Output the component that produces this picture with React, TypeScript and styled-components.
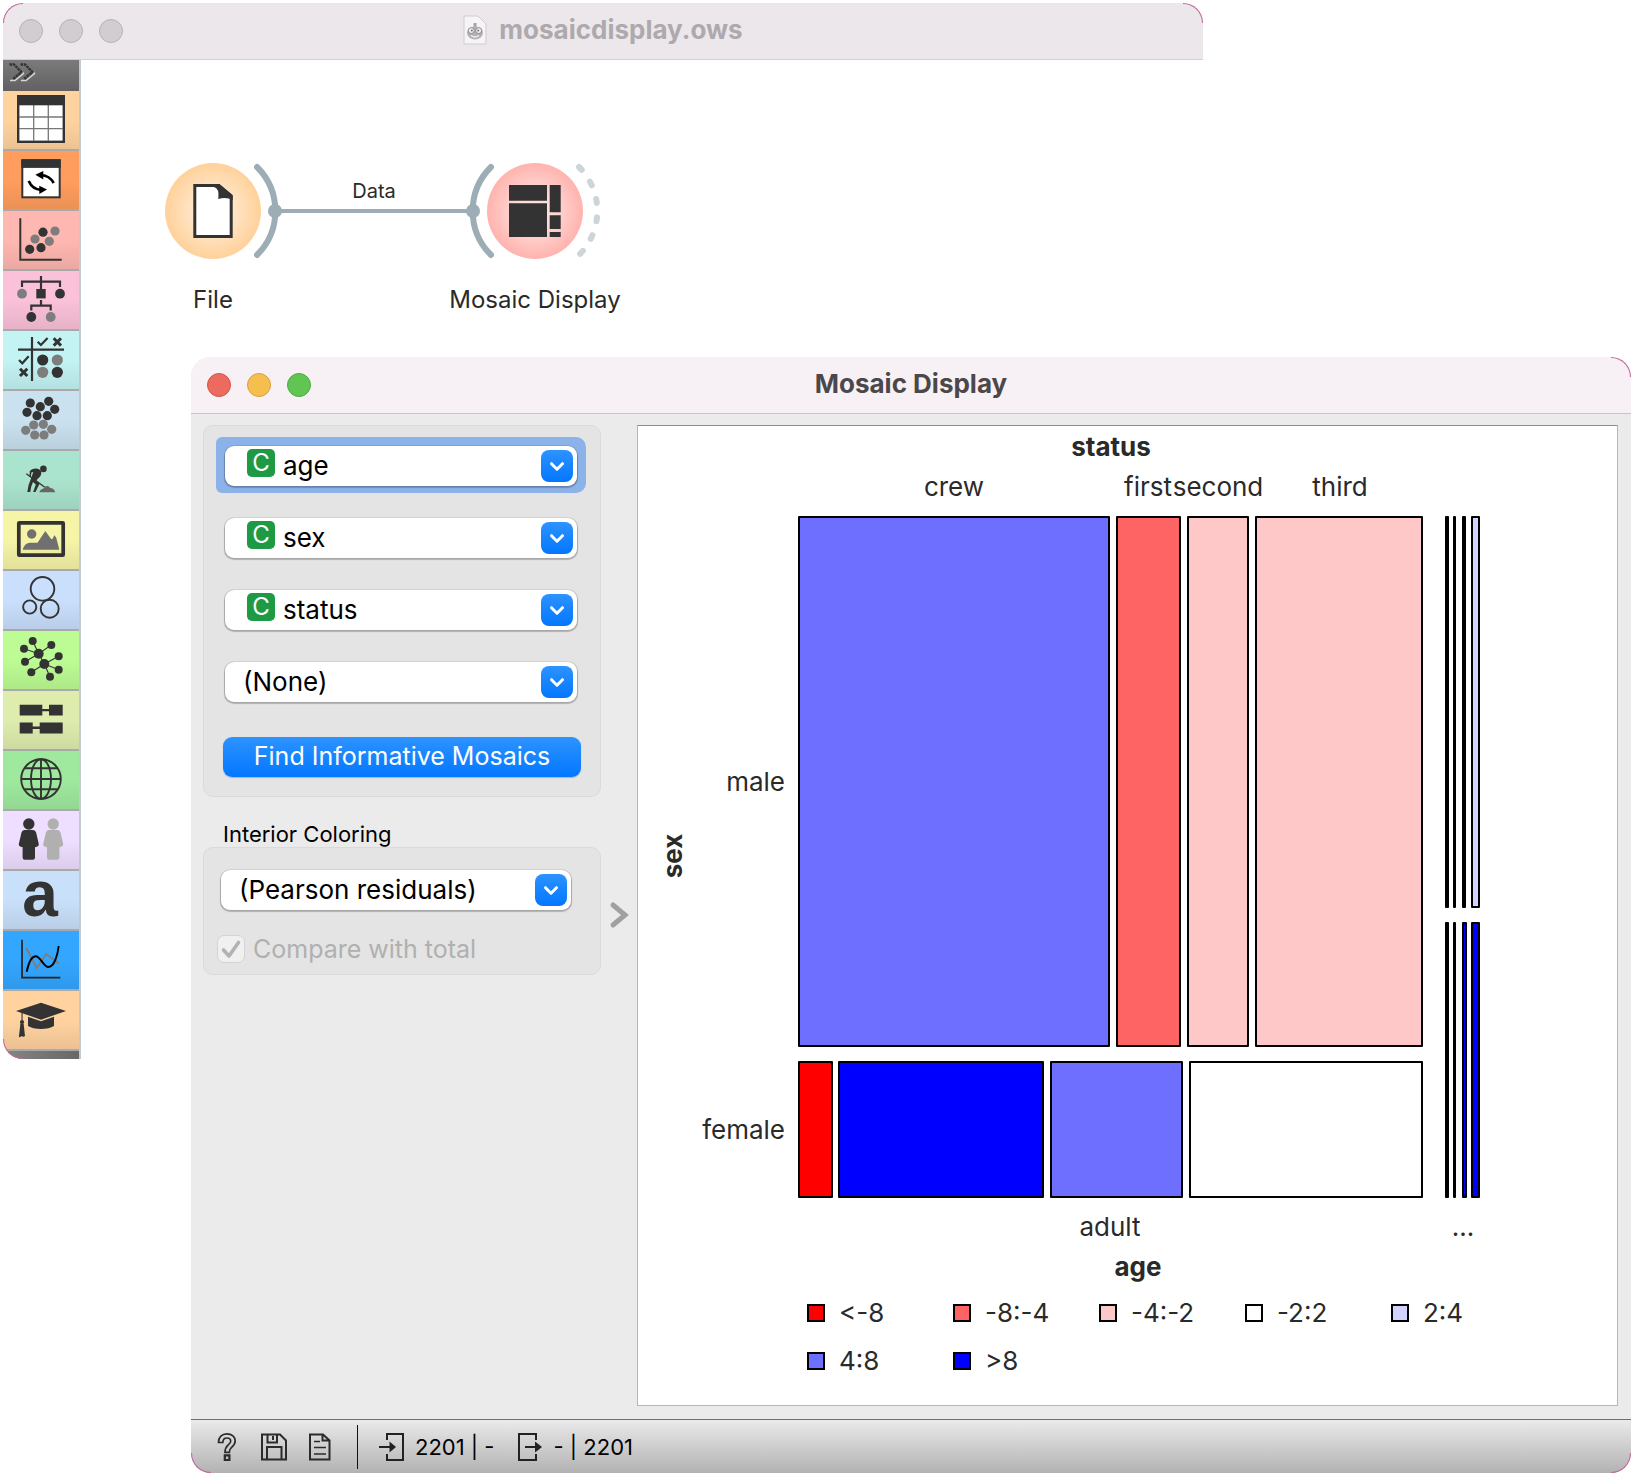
import React from "react";
import styled, { createGlobalStyle } from "styled-components";

const GlobalStyle = createGlobalStyle`
  * {
    box-sizing: border-box;
  }
  body {
    margin: 0;
    background: #fff;
    font-family: Inter, "Liberation Sans", sans-serif;
    color: #000;
  }
  button, select, input {
    font-family: inherit;
  }
`;

/* ---------- windows ---------- */

const Desktop = styled.main`
  display: grid;
  grid-template-columns: minmax(0, 1fr);
  align-items: start;
`;

const DocumentWindow = styled.section`
  grid-area: 1 / 1;
  position: relative;
  margin: 3px 431px 0 3px;
`;

const DialogWindow = styled.section`
  grid-area: 1 / 1;
  position: relative;
  margin: 357px 3px 3px 191px;
  border-radius: 20px;
  background: #ebebeb;
`;

const Corner = styled.span<{ $v: "top" | "bottom"; $h: "left" | "right" }>`
  position: absolute;
  ${(p) => p.$v}: 0;
  ${(p) => p.$h}: 0;
  width: 20px;
  height: 20px;
  border: 0 solid #c4689d;
  border-${(p) => p.$v}-width: 1px;
  border-${(p) => p.$h}-width: 1px;
  border-${(p) => p.$v}-${(p) => p.$h}-radius: 20px;
`;

const TitleBar = styled.header<{ $active?: boolean }>`
  display: grid;
  grid-template-columns: 120px 1fr 120px;
  align-items: center;
  height: 57px;
  padding: 0 16px;
  border-radius: 20px 20px 0 0;
  border-bottom: 1px solid ${(p) => (p.$active ? "#c9c3c8" : "#d3d0d3")};
  background: ${(p) => (p.$active ? "#f7f1f6" : "#ece7eb")};
  color: ${(p) => (p.$active ? "#4b474a" : "#aea9ad")};
`;

const Lights = styled.div`
  display: flex;
  gap: 16px;
`;

const Light = styled.button<{ $fill: string; $edge: string }>`
  width: 24px;
  height: 24px;
  padding: 0;
  border: 1px solid ${(p) => p.$edge};
  border-radius: 50%;
  background: ${(p) => p.$fill};
`;

const Title = styled.h1`
  display: flex;
  align-items: center;
  justify-content: center;
  gap: 12px;
  margin: 0;
  padding-bottom: 3px;
  font-size: 26px;
  line-height: 32px;
  font-weight: 700;
`;

/* ---------- document window ---------- */

const Workspace = styled.div`
  display: flex;
`;

const Dock = styled.nav`
  flex: none;
  width: 78px;
  border-right: 2px solid #c2c9cf;
`;

const DockBody = styled.div`
  overflow: hidden;
  border-bottom-left-radius: 20px;
`;

const ExpandButton = styled.button`
  display: block;
  width: 100%;
  height: 31px;
  padding: 0;
  border: 0;
  background: linear-gradient(#7b7b7b, #616161);
  svg {
    display: block;
  }
`;

const CategoryButton = styled.button<{ $color: string }>`
  display: block;
  width: 100%;
  height: 60px;
  padding: 0;
  border: 0;
  border-bottom: 2px solid #a9a9a9;
  background: linear-gradient(rgba(0, 0, 0, 0) 50%, rgba(0, 0, 0, 0.08)) ${(p) => p.$color};
  svg {
    display: block;
    overflow: visible;
  }
`;

const DockFoot = styled.div`
  height: 8px;
  background: linear-gradient(90deg, #858585, #686868);
`;

const Canvas = styled.div`
  flex: 1;
  min-width: 0;
  svg {
    display: block;
  }
`;

/* ---------- dialog ---------- */

const DialogBody = styled.div`
  display: grid;
  grid-template-columns: 398px 36px minmax(0, 1fr);
  padding: 11px 13px 13px 12px;
`;

const Group = styled.div<{ $pad: string }>`
  padding: ${(p) => p.$pad};
  border: 1px solid #dadada;
  border-radius: 10px;
  background: #e4e4e4;
`;

const GroupTitle = styled.h2`
  margin: 24px 0 0 20px;
  font-size: 22px;
  line-height: 26px;
  font-weight: 400;
`;

const ComboStack = styled.div`
  display: flex;
  flex-direction: column;
  gap: 16px;
`;

const ComboRing = styled.div<{ $focused?: boolean }>`
  padding: 9px 9px 7px;
  border-radius: 6px 10px 10px 6px;
  background: ${(p) => (p.$focused ? "#8cb2ea" : "transparent")};
`;

const ComboBox = styled.div`
  position: relative;
  height: 40px;
  border-radius: 9px;
  background: #fff;
  box-shadow: 0 0 0 1px rgba(0, 0, 0, 0.06), 0 1px 1px 1px rgba(0, 0, 0, 0.22);
`;

const ComboSelect = styled.select<{ $icon?: boolean }>`
  appearance: none;
  display: block;
  width: 100%;
  height: 40px;
  padding: 0 40px 2px ${(p) => (p.$icon ? 58 : 18)}px;
  border: 0;
  border-radius: 9px;
  outline: 0;
  background: transparent;
  color: #000;
  font-size: 26px;
`;

const VariableBadge = styled.span`
  position: absolute;
  left: 22px;
  top: 3px;
  width: 28px;
  height: 28px;
  border-radius: 5px;
  background: #1d9a43;
  color: #fff;
  font-size: 24px;
  line-height: 28px;
  text-align: center;
  pointer-events: none;
`;

const ComboArrow = styled.span`
  position: absolute;
  right: 4px;
  top: 4px;
  width: 32px;
  height: 32px;
  border-radius: 8px;
  background: linear-gradient(#2d93ff, #0277ff);
  pointer-events: none;
`;

const PrimaryButton = styled.button`
  display: block;
  width: 358px;
  height: 40px;
  margin: 28px 0 0 7px;
  padding: 0 0 2px;
  border: 0;
  border-radius: 9px;
  background: linear-gradient(#2d93ff, #0277ff);
  box-shadow: 0 1px 1px rgba(0, 80, 200, 0.3);
  color: #fff;
  font-size: 25px;
  line-height: 32px;
`;

const CheckRow = styled.label`
  display: flex;
  align-items: center;
  gap: 8px;
  height: 28px;
  margin: 18px 0 0 5px;
  color: #b0b0b0;
  font-size: 25px;
  line-height: 28px;
`;

const CheckSlot = styled.span`
  position: relative;
  width: 28px;
  height: 28px;
  svg {
    position: absolute;
    left: 0;
    top: 0;
    pointer-events: none;
  }
`;

const CheckInput = styled.input`
  appearance: none;
  display: block;
  width: 28px;
  height: 28px;
  margin: 0;
  border: 1px solid #d4d4d4;
  border-radius: 7px;
  background: #f0f0f0;
`;

const CollapseButton = styled.button`
  align-self: center;
  justify-self: center;
  width: 24px;
  height: 32px;
  padding: 0;
  border: 0;
  background: none;
  svg {
    display: block;
  }
`;

const ChartFrame = styled.div`
  border: 1px solid #b6b6b6;
  border-top-color: #8e8e8e;
  background: #fff;
  svg {
    display: block;
    width: 100%;
    height: auto;
  }
`;

const StatusBar = styled.footer`
  display: flex;
  align-items: center;
  height: 54px;
  padding: 0 26px;
  border-top: 1px solid #6f6f6f;
  border-radius: 0 0 20px 20px;
  background: linear-gradient(#eaeaea, #b2b2b2);
  font-size: 22px;
  line-height: 28px;
`;

const Tools = styled.div`
  display: flex;
  gap: 16px;
`;

const ToolButton = styled.button`
  width: 28px;
  height: 30px;
  padding: 0;
  border: 0;
  background: none;
  svg {
    display: block;
  }
`;

const Divider = styled.span`
  width: 1px;
  height: 44px;
  margin: 0 20px 0 24px;
  background: #111;
`;

const Summary = styled.span`
  display: flex;
  align-items: center;
  gap: 9px;
  margin-right: 22px;
  white-space: pre;
`;

/* ---------- category icons ---------- */

const DARK = "#333";
const GRAY = "#7d7d7d";

type Dot = [number, number, number?];

const Dots: React.FC<{ points: Dot[]; r: number; fill: string }> = ({ points, r, fill }) => (
  <>
    {points.map(([x, y, own], i) => (
      <circle key={i} cx={x} cy={y} r={own || r} fill={fill} />
    ))}
  </>
);

const Person: React.FC<{ x: number; fill: string }> = ({ x, fill }) => (
  <g transform={`translate(${x} 0)`} fill={fill}>
    <circle cx="0" cy="13" r="5.7" />
    <path d="M-4.5 19H4.5Q6.6 19 7.3 21.5L10 33Q10.2 35.8 6.2 36.2V46.5Q6.2 48.7 4 48.7H-4Q-6.2 48.7-6.2 46.5V36.2Q-10.2 35.8-10 33L-7.3 21.5Q-6.6 19-4.5 19Z" />
  </g>
);

const categories: { name: string; color: string; icon: React.ReactNode }[] = [
  {
    name: "Data",
    color: "#ffd39f",
    icon: (
      <>
        <rect x="15.2" y="5.2" width="45.6" height="45.6" fill="#fff" stroke={DARK} strokeWidth="2.4" />
        <path d="M30.7 14V50M45.3 14V50M16 26H60M16 37.7H60" stroke="#777" strokeWidth="1.3" />
        <rect x="14" y="4" width="48" height="10.3" fill={DARK} />
      </>
    ),
  },
  {
    name: "Transform",
    color: "#ff9d5e",
    icon: (
      <>
        <rect x="19.3" y="9.3" width="37.4" height="37" fill="#fff" stroke={DARK} strokeWidth="2" />
        <rect x="18.3" y="8.3" width="39.4" height="8.6" fill={DARK} />
        <path d="M50.7 32Q46.5 24.5 38 24M25.7 30Q29.5 38.5 38 38.8" fill="none" stroke="#000" strokeWidth="2.7" />
        <path d="M32.3 23.7L40.3 20V28.4ZM44 38.6L36.3 34.8V43Z" fill="#000" />
      </>
    ),
  },
  {
    name: "Visualize",
    color: "#ffb7b1",
    icon: (
      <>
        <path d="M17.3 7.3V48.7H58.7" fill="none" stroke={DARK} strokeWidth="2" />
        <Dots r={4.6} fill={GRAY} points={[[32, 28], [46.3, 30.3], [52, 20]]} />
        <Dots r={4.6} fill={DARK} points={[[26.7, 38.3], [38, 36.7], [40, 21.2]]} />
      </>
    ),
  },
  {
    name: "Model",
    color: "#fac1d9",
    icon: (
      <>
        <path
          d="M38 5V20M19 16V10.7H57V16M38 29V34.7M28.3 39.5V34.7H47.7V39.5"
          fill="none"
          stroke={DARK}
          strokeWidth="2.2"
        />
        <rect x="33.3" y="18" width="9.4" height="9.4" fill={DARK} />
        <Dots r={4.9} fill={GRAY} points={[[19, 22.7], [47.7, 46]]} />
        <Dots r={4.9} fill={DARK} points={[[57, 22.7], [28.3, 46]]} />
      </>
    ),
  },
  {
    name: "Evaluate",
    color: "#c3f3f3",
    icon: (
      <>
        <path d="M15 18.7H61M29 6V50" stroke={DARK} strokeWidth="2.2" />
        <path
          d="M34.7 10.7L37.9 14L44.6 7M16 29L19.3 32.3L25.7 25.3"
          fill="none"
          stroke={DARK}
          strokeWidth="2.2"
        />
        <path
          d="M50.7 7.3L58 14.6M58 7.3L50.7 14.6M17 37.7L24.3 45M24.3 37.7L17 45"
          stroke={DARK}
          strokeWidth="3"
        />
        <Dots r={5.6} fill={DARK} points={[[39.7, 29], [54.3, 41.3]]} />
        <Dots r={5.6} fill={GRAY} points={[[54.3, 29], [39.7, 41.3]]} />
      </>
    ),
  },
  {
    name: "Unsupervised",
    color: "#cae1ef",
    icon: (
      <>
        <Dots
          r={4.6}
          fill={GRAY}
          points={[[30.7, 34], [40.3, 33.3], [22.7, 39.3], [48.7, 38.3], [31.7, 44], [41, 44]]}
        />
        <Dots
          r={4.6}
          fill={DARK}
          points={[[27.3, 12], [45.7, 10.3], [37.3, 15.7], [51.7, 18.3], [24, 21.3], [34, 24.7], [44.3, 24.7]]}
        />
      </>
    ),
  },
  {
    name: "Prototypes",
    color: "#abe4ce",
    icon: (
      <>
        <path d="M36.3 41.3Q37.5 38 40.5 37.6Q42 34 45.5 35.3Q47 37.5 49 37.3Q51.5 38.5 52.3 41.3Z" fill="#666" />
        <circle cx="40.4" cy="17.9" r="3.3" fill={DARK} />
        <path
          d="M29 18.3Q35.5 16 38.2 20.5Q38.8 24.5 35.5 27L33.2 29.5L36.8 32.3L32.5 41H30.2L32.8 33.5L30 31L28.3 35.5L27.2 41H24.3L25.6 34L28.5 26.3L30.3 21L28.4 21.5L27.8 26H26.4L26.8 20Z"
          fill={DARK}
        />
        <path d="M23.3 22.7L41.5 36" stroke={DARK} strokeWidth="1.4" />
      </>
    ),
  },
  {
    name: "Image Analytics",
    color: "#f6f4a7",
    icon: (
      <>
        <rect x="15.8" y="11.8" width="44.4" height="32.4" fill="none" stroke={DARK} strokeWidth="3.7" rx="0.5" />
        <circle cx="28.7" cy="23" r="4.7" fill="#707070" />
        <path
          d="M20 38.7V37.5Q22 32 27 31.7H34.5L42.3 20L48.3 28.3L49.6 27.8L51.3 24.3L53.2 26.5L56.3 38.7Z"
          fill="#707070"
        />
      </>
    ),
  },
  {
    name: "Spectroscopy",
    color: "#c9dffc",
    icon: (
      <g fill="none" stroke={DARK} strokeWidth="1.9">
        <circle cx="39.5" cy="17.8" r="11.8" />
        <circle cx="26.7" cy="36" r="6.6" />
        <circle cx="46.7" cy="37.7" r="9" />
      </g>
    ),
  },
  {
    name: "Networks",
    color: "#bdfc94",
    icon: (
      <>
        <path
          d="M29.7 10L35.7 22.7L41.3 33L47 45.7M21 17.7L35.7 22.7L48.3 14M22 30.7L35.7 22.7M55.7 25.3L41.3 33L55.7 38.7M28.3 41.3L41.3 33"
          fill="none"
          stroke={DARK}
          strokeWidth="1.1"
        />
        <Dots
          r={4}
          fill={DARK}
          points={[
            [35.7, 22.7, 5], [41.3, 33, 5], [29.7, 10], [21, 17.7], [48.3, 14], [22, 30.7],
            [55.7, 25.3], [55.7, 38.7], [28.3, 41.3], [47, 45.7],
          ]}
        />
      </>
    ),
  },
  {
    name: "Time Series",
    color: "#deedae",
    icon: (
      <path
        d="M16.7 13.7H39.3V18H46V13.7H59.7V24.5H46V20.3H39.3V24.5H16.7ZM16.7 31.6H29.7V35.6H36.7V31.6H59.7V42.4H36.7V38H29.7V42.4H16.7Z"
        fill={DARK}
      />
    ),
  },
  {
    name: "Geo",
    color: "#9fe99f",
    icon: (
      <g fill="none" stroke={DARK} strokeWidth="1.9">
        <circle cx="38" cy="28" r="19.8" />
        <ellipse cx="38" cy="28" rx="10" ry="19.8" />
        <path d="M38 8V48M18 28H58M21.5 17.3H54.5M21.5 38.3H54.5" />
      </g>
    ),
  },
  {
    name: "Fairness",
    color: "#eedeff",
    icon: (
      <>
        <Person x={25.8} fill={DARK} />
        <Person x={50.2} fill="#b0b0b0" />
      </>
    ),
  },
  {
    name: "Text Mining",
    color: "#c9e0fa",
    icon: (
      <text x="37" y="45" textAnchor="middle" fontFamily="'Liberation Sans', sans-serif" fontWeight="700" fontSize="64" fill={DARK}>
        a
      </text>
    ),
  },
  {
    name: "Functional",
    color: "#33a6ff",
    icon: (
      <g fill="none">
        <path d="M19 8.7V46.7H57.3" stroke="#222" strokeWidth="1.7" />
        <path d="M23.3 17L33.7 37L43.3 23L56 32.5" stroke="#7d7d7d" strokeWidth="1.9" />
        <path d="M23.7 40.7C26 30 29 25.3 32.7 25.3C37.5 25.3 40.5 36 45.3 36C51 36 54.5 25 55.7 15" stroke="#000" strokeWidth="1.9" />
      </g>
    ),
  },
  {
    name: "Educational",
    color: "#ffd2a0",
    icon: (
      <g fill={DARK}>
        <path d="M13 20L38 11.7L63 20L38 28.7Z" />
        <path d="M25 25.7L38 30.3L51 25.7V35Q46 37.9 38 37.9Q30 37.9 25 35Z" />
        <path d="M18.5 21.5H19.6V29.5H18.5Z" />
        <circle cx="19" cy="31" r="2.1" />
        <path d="M17.4 32.5H20.6L22 45Q20 46.3 18.8 45Q17 46.8 15.9 45.8Z" />
      </g>
    ),
  },
];

/* ---------- workflow ---------- */

const Workflow: React.FC = () => (
  <svg width="600" height="300" viewBox="0 0 600 300" fontFamily="Inter, sans-serif" fill="#2a2a2a">
    <defs>
      <radialGradient id="file-node">
        <stop offset="0" stopColor="#fff0dd" />
        <stop offset="0.35" stopColor="#ffe8cd" />
        <stop offset="1" stopColor="#ffd19a" />
      </radialGradient>
      <radialGradient id="mosaic-node">
        <stop offset="0" stopColor="#ffe4e2" />
        <stop offset="0.35" stopColor="#ffdbd8" />
        <stop offset="1" stopColor="#ffb3ae" />
      </radialGradient>
    </defs>
    <g fill="none" stroke="#9cadb5" strokeWidth="6" strokeLinecap="round">
      <path d="M176 107A62 62 0 0 1 176 195" />
      <path d="M410 107A62 62 0 0 0 410 195" />
      <path d="M194 151H392" strokeWidth="4" />
      <path d="M498 107A62 62 0 0 1 498 195" stroke="#cdd5d9" strokeDasharray="4 14.4" />
    </g>
    <circle cx="194" cy="151" r="7" fill="#9cadb5" />
    <circle cx="392" cy="151" r="7" fill="#9cadb5" />
    <g transform="translate(132 151)">
      <circle r="48" fill="url(#file-node)" />
      <path d="M-18.2-25.5H5.5L18.2-14.5V25.5H-18.2Z" fill="#fff" stroke="#333" strokeWidth="3" />
      <path d="M1-27H6.5L19.7-16V-11Q13-14.5 5.3-12Q6.5-23 1-24Z" fill="#333" />
    </g>
    <g transform="translate(454 151)">
      <circle r="48" fill="url(#mosaic-node)" />
      <path
        d="M-26-26H12V-10.3H-26ZM-26-7.7H12V26H-26ZM14.7-26H25.7V1.3H14.7ZM14.7 4.3H25.7V18H14.7ZM14.7 21H25.7V26H14.7Z"
        fill="#333"
      />
    </g>
    <g textAnchor="middle">
      <text x="293" y="138" fontSize="20">Data</text>
      <text x="132" y="248" fontSize="24">File</text>
      <text x="454" y="248" fontSize="24">Mosaic Display</text>
    </g>
  </svg>
);

/* ---------- mosaic chart ---------- */

const RED = "#ff0000";
const CORAL = "#ff6464";
const PINK = "#ffc8c8";
const WHITE = "#ffffff";
const PALE = "#d2d2ff";
const VIOLET = "#6e6eff";
const BLUE = "#0000ff";

// x, y, width, height, fill
const tiles: [number, number, number, number, string][] = [
  [161, 91, 310, 529, VIOLET],
  [479, 91, 63, 529, CORAL],
  [550, 91, 60, 529, PINK],
  [618, 91, 166, 529, PINK],
  [161, 636, 33, 135, RED],
  [201, 636, 204, 135, BLUE],
  [413, 636, 131, 135, VIOLET],
  [552, 636, 232, 135, WHITE],
  [808, 91, 2, 390, "#000"],
  [816, 91, 1, 390, "#000"],
  [825, 91, 2, 390, "#000"],
  [834, 91, 7, 390, PALE],
  [808, 497, 2, 274, "#000"],
  [816, 497, 1, 274, "#000"],
  [825, 497, 3, 274, BLUE],
  [834, 497, 7, 274, BLUE],
];

const legend: [string, string][] = [
  ["<-8", RED],
  ["-8:-4", CORAL],
  ["-4:-2", PINK],
  ["-2:2", WHITE],
  ["2:4", PALE],
  ["4:8", VIOLET],
  [">8", BLUE],
];

const MosaicChart: React.FC = () => (
  <svg viewBox="0 0 979 979" fontFamily="Inter, sans-serif" fontSize="26" fill="#2a2a2a">
    <g textAnchor="middle">
      <text x="473" y="30" fontWeight="700">status</text>
      <text x="316" y="70">crew</text>
      <text x="510" y="70">first</text>
      <text x="580" y="70">second</text>
      <text x="702" y="70">third</text>
      <text x="472" y="810">adult</text>
      <text x="825" y="810">...</text>
      <text x="500" y="850" fontWeight="700">age</text>
      <text transform="translate(44 430) rotate(-90)" fontWeight="700">sex</text>
    </g>
    <g textAnchor="end">
      <text x="147" y="365">male</text>
      <text x="147" y="713">female</text>
    </g>
    <g stroke="#000" strokeWidth="2" strokeLinejoin="round">
      {tiles.map(([x, y, w, h, fill], i) => (
        <rect key={i} x={x} y={y} width={w} height={h} fill={fill} />
      ))}
    </g>
    {legend.map(([label, fill], i) => (
      <g key={label} transform={`translate(${170 + (i % 5) * 146} ${879 + Math.floor(i / 5) * 48})`}>
        <rect width="16" height="16" fill={fill} stroke="#000" strokeWidth="2" />
        <text x="31" y="17">{label}</text>
      </g>
    ))}
  </svg>
);

/* ---------- controls ---------- */

interface ComboProps {
  label: string;
  value: string;
  badge?: boolean;
  focused?: boolean;
}

const Combo: React.FC<ComboProps> = ({ label, value, badge, focused }) => (
  <ComboRing $focused={focused}>
    <ComboBox>
      <ComboSelect aria-label={label} $icon={badge} defaultValue={value}>
        <option>{value}</option>
      </ComboSelect>
      {badge && <VariableBadge aria-hidden>C</VariableBadge>}
      <ComboArrow>
        <svg width="32" height="32" viewBox="0 0 32 32">
          <path
            d="M10.5 13.7L16 19.2L21.5 13.7"
            fill="none"
            stroke="#fff"
            strokeWidth="3"
            strokeLinecap="round"
            strokeLinejoin="round"
          />
        </svg>
      </ComboArrow>
    </ComboBox>
  </ComboRing>
);

const lightColors = [
  { name: "Close", fill: "#ec6a5e", edge: "#d35549" },
  { name: "Minimize", fill: "#f4bf4f", edge: "#d9a13b" },
  { name: "Zoom", fill: "#61c554", edge: "#4dab41" },
];

const WindowLights: React.FC<{ active?: boolean }> = ({ active }) => (
  <Lights>
    {lightColors.map((l) => (
      <Light
        key={l.name}
        aria-label={l.name}
        $fill={active ? l.fill : "#d2cdd1"}
        $edge={active ? l.edge : "#b7b2b6"}
      />
    ))}
  </Lights>
);

const DocumentIcon: React.FC = () => (
  <svg width="24" height="30" viewBox="0 0 24 30">
    <path d="M1 1H15L23 9V29H1Z" fill="#f6f4f6" stroke="#d0ccd0" />
    <path d="M12 8V13" stroke="#a5a1a5" strokeWidth="3" />
    <ellipse cx="12" cy="18" rx="8" ry="6.5" fill="#b5b1b5" />
    <circle cx="8.3" cy="15.6" r="3" fill="#eee" stroke="#8e8a8e" />
    <circle cx="15.7" cy="15.6" r="3" fill="#eee" stroke="#8e8a8e" />
    <circle cx="8.8" cy="15.6" r="1" fill="#777" />
    <circle cx="15.2" cy="15.6" r="1" fill="#777" />
    <path d="M8 20.5Q12 23.5 16 20.5" fill="none" stroke="#eee" strokeWidth="1.4" />
  </svg>
);

const StatusTools: React.FC = () => (
  <Tools>
    <ToolButton aria-label="Help">
      <svg width="28" height="30" viewBox="0 0 28 30" fill="none" stroke="#2b2b2b" strokeWidth="1.7">
        <path d="M1.5 10.5C1.5 5 5 1.8 9.8 1.8C15 1.8 18.2 5 18.2 9C18.2 12.5 16.2 14 14.4 15.5C12.8 17 12.3 17.8 12.3 20.3H8C8 16.5 9 15 11 13.2C12.8 11.6 13.7 10.8 13.7 9.2C13.7 7.3 12.2 6 9.9 6C7.4 6 5.9 7.6 5.8 10.5Z" />
        <path d="M7.8 23.3H12.4V28H7.8Z" strokeWidth="2.2" />
      </svg>
    </ToolButton>
    <ToolButton aria-label="Save">
      <svg width="28" height="30" viewBox="0 0 28 30" fill="none" stroke="#2b2b2b" strokeWidth="2">
        <path d="M1 2.5H19L25 8.5V27.5H1ZM6.5 2.5V10.5H16V2.5M6 27.5V15H20.5V27.5" />
        <path d="M12 4V8" />
      </svg>
    </ToolButton>
    <ToolButton aria-label="Report">
      <svg width="28" height="30" viewBox="0 0 28 30" fill="none" stroke="#2b2b2b" strokeWidth="2">
        <path d="M5 2.5H18L24.5 8.5V27.5H5ZM17.5 2.5V8.5H24.5" />
        <path d="M9 9.5H15M9 15.5H21M9 22H21" strokeWidth="1.7" />
      </svg>
    </ToolButton>
  </Tools>
);

const App: React.FC = () => (
  <>
    <GlobalStyle />
    <Desktop>
      <DocumentWindow>
        <TitleBar>
          <WindowLights />
          <Title>
            <DocumentIcon />
            mosaicdisplay.ows
          </Title>
        </TitleBar>
        <Workspace>
          <Dock>
            <DockBody>
              <ExpandButton aria-label="Expand">
                <svg width="76" height="31" viewBox="0 0 76 31" fill="none">
                  <path d="M7 20.5H12L20.5 13.5L19 11M18 20.5H23L31.5 13.5L30 11" stroke="#d8d8d8" strokeWidth="1.4" />
                  <path
                    d="M6.5 4.5H11L18.5 12L10 19M17.5 4.5H22L29.5 12L21 19"
                    stroke="#333"
                    strokeWidth="2.4"
                    strokeDasharray="2.6 0.7"
                  />
                </svg>
              </ExpandButton>
              {categories.map((c) => (
                <CategoryButton key={c.name} $color={c.color} aria-label={c.name}>
                  <svg width="76" height="58" viewBox="0 0 76 58">
                    {c.icon}
                  </svg>
                </CategoryButton>
              ))}
              <DockFoot />
            </DockBody>
          </Dock>
          <Canvas>
            <Workflow />
          </Canvas>
        </Workspace>
        <Corner $v="top" $h="left" />
        <Corner $v="top" $h="right" />
        <Corner $v="bottom" $h="left" />
      </DocumentWindow>

      <DialogWindow>
        <TitleBar $active>
          <WindowLights active />
          <Title>Mosaic Display</Title>
        </TitleBar>
        <DialogBody>
          <div>
            <Group $pad="11px 14px 19px 12px">
              <ComboStack>
                <Combo label="First variable" value="age" badge focused />
                <Combo label="Second variable" value="sex" badge />
                <Combo label="Third variable" value="status" badge />
                <Combo label="Fourth variable" value="(None)" />
              </ComboStack>
              <PrimaryButton>Find Informative Mosaics</PrimaryButton>
            </Group>
            <GroupTitle>Interior Coloring</GroupTitle>
            <Group $pad="13px 20px 11px 8px">
              <Combo label="Interior coloring" value="(Pearson residuals)" />
              <CheckRow>
                <CheckSlot>
                  <CheckInput type="checkbox" defaultChecked disabled />
                  <svg width="28" height="28" viewBox="0 0 28 28">
                    <path
                      d="M6.5 15L12 21L21.5 7.5"
                      fill="none"
                      stroke="#b2b2b2"
                      strokeWidth="3.6"
                      strokeLinecap="round"
                      strokeLinejoin="round"
                    />
                  </svg>
                </CheckSlot>
                Compare with total
              </CheckRow>
            </Group>
          </div>
          <CollapseButton aria-label="Collapse controls">
            <svg width="24" height="32" viewBox="0 0 24 32">
              <path d="M6 5L18 15L6 25" fill="none" stroke="#a0a0a0" strokeWidth="5" strokeLinecap="round" />
            </svg>
          </CollapseButton>
          <ChartFrame>
            <MosaicChart />
          </ChartFrame>
        </DialogBody>
        <StatusBar>
          <StatusTools />
          <Divider />
          <Summary>
            <svg width="28" height="30" viewBox="0 0 28 30" fill="none" stroke="#222" strokeWidth="2">
              <path d="M9 8V2H25V28H9V22M1 15H14" />
              <path d="M11.5 9.5L18 15L11.5 20.5Z" fill="#222" stroke="none" />
            </svg>
            {"2201 | -"}
          </Summary>
          <Summary>
            <svg width="28" height="30" viewBox="0 0 28 30" fill="none" stroke="#222" strokeWidth="2">
              <path d="M20 8V2H3V28H20V22M9 15H21" />
              <path d="M19 9.5L26 15L19 20.5Z" fill="#222" stroke="none" />
            </svg>
            {"- | 2201"}
          </Summary>
        </StatusBar>
        <Corner $v="top" $h="right" />
        <Corner $v="bottom" $h="left" />
        <Corner $v="bottom" $h="right" />
      </DialogWindow>
    </Desktop>
  </>
);

export default App;
